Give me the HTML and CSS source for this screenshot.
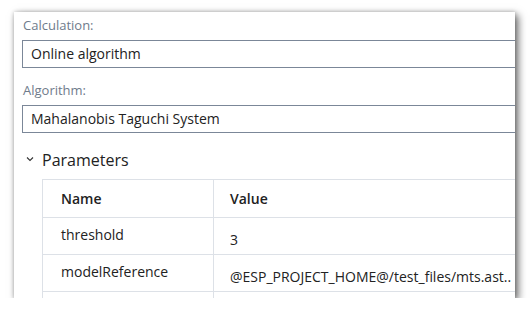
FILE: index.html
```html
<!DOCTYPE html>
<html lang="en">
<head>
  <meta charset="UTF-8">
  <title>Calculation settings</title>
  <link rel="stylesheet" href="styles.css">
</head>
<body>
  <div class="page">
    <div class="card">
      <div class="field">
        <label class="field-label">Calculation:</label>
        <div class="field-box">Online algorithm</div>
      </div>
      <div class="field">
        <label class="field-label">Algorithm:</label>
        <div class="field-box">Mahalanobis Taguchi System</div>
      </div>

      <div class="section-title">
        <svg class="chevron" width="8" height="6" viewBox="0 0 8 6">
          <polyline points="1,1.5 4,4.5 7,1.5" fill="none" stroke="#333" stroke-width="1.1"/>
        </svg>
        <span>Parameters</span>
      </div>

      <table class="param-table">
        <thead>
          <tr>
            <th class="col-name">Name</th>
            <th class="col-value">Value</th>
          </tr>
        </thead>
        <tbody>
          <tr>
            <td class="col-name">threshold</td>
            <td class="col-value">3</td>
          </tr>
          <tr>
            <td class="col-name">modelReference</td>
            <td class="col-value">@ESP_PROJECT_HOME@/test_files/mts.ast..</td>
          </tr>
          <tr>
            <td class="col-name"></td>
            <td class="col-value"></td>
          </tr>
        </tbody>
      </table>
    </div>
  </div>
</body>
</html>
```

FILE: styles.css
```css
body {
  margin: 0;
  background-color: #fff;
  font-family: "Open Sans", "Noto Sans", sans-serif;
  color: #222;
}
.page {
  padding: 12px 0 0 14px;
}
.card {
  width: 501px;
  height: 286px;
  overflow: hidden;
  background-color: #fff;
  box-shadow: 3px 3px 8px rgba(0,0,0,0.6), 0 0 4px rgba(0,0,0,0.2);
  padding: 3px 0 0 8px;
  box-sizing: border-box;
}
.field {
  margin-bottom: 12px;
}
.field-label {
  display: block;
  padding-left: 1px;
  font-size: 13px;
  line-height: 20px;
  color: #6f7b8b;
  margin-bottom: 5px;
}
.field-box {
  width: 520px;
  height: 28px;
  box-sizing: border-box;
  border: 1px solid #7b8798;
  padding-left: 8px;
  font-size: 14px;
  line-height: 25px;
}
.section-title {
  display: flex;
  align-items: center;
  height: 24px;
  margin-top: 15px;
  padding-left: 4px;
  font-size: 16px;
}
.chevron {
  margin-right: 8px;
  margin-top: -3px;
}
.param-table {
  margin: 7px 0 0 20px;
  border-collapse: collapse;
  width: 520px;
  font-size: 14px;
}
.param-table th,
.param-table td {
  border: 1px solid #dde1e7;
  height: 36px;
  padding: 0;
  text-align: left;
}
.param-table th {
  height: 37px;
  font-weight: 600;
}
.col-name {
  width: 152px;
  padding-left: 18px !important;
}
.col-value {
  padding-left: 16px !important;
  white-space: nowrap;
}
.param-table td.col-name {
  height: 33px;
  padding-bottom: 3px !important;
}
.param-table td.col-value {
  height: 29px;
  padding-top: 7px !important;
}
```
